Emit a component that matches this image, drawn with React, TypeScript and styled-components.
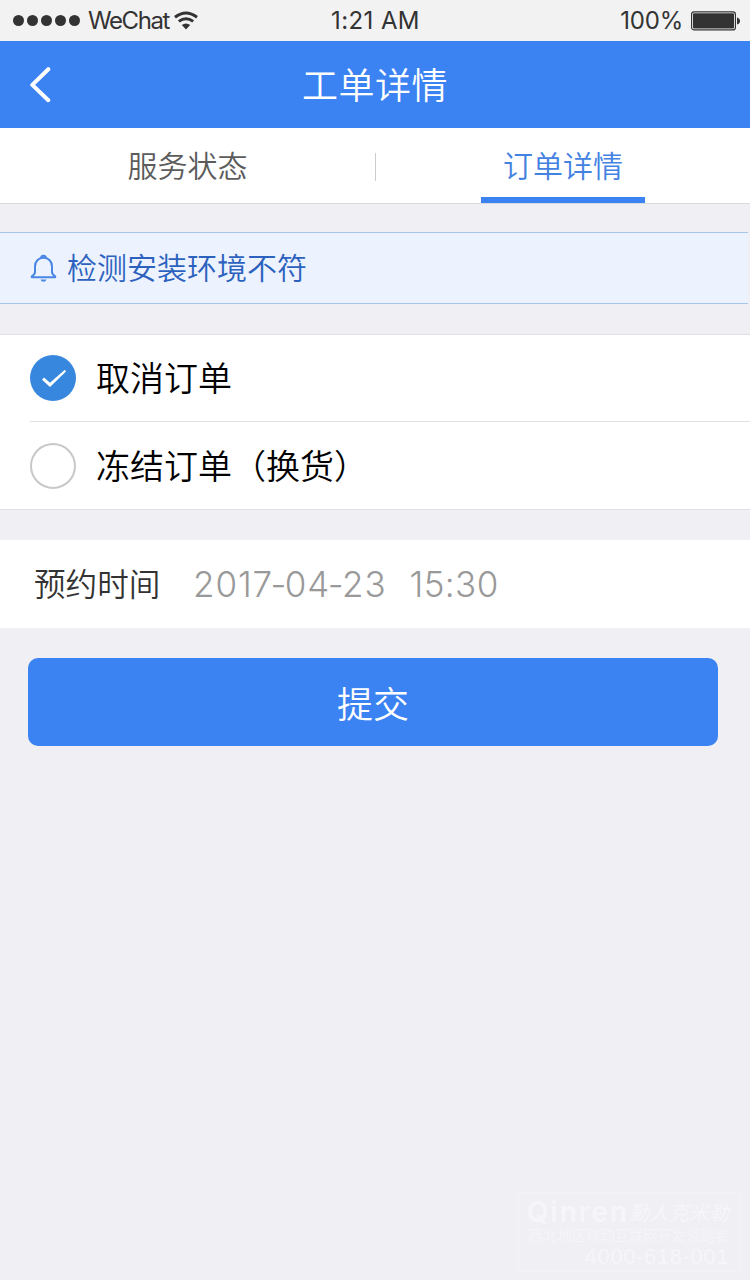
import React, { useState } from "react";
import styled, { createGlobalStyle, css } from "styled-components";

const cjk = `"Noto Sans CJK SC", sans-serif`;
const latin = `Inter, "Noto Sans CJK SC", sans-serif`;

const GlobalStyle = createGlobalStyle`
  *, *::before, *::after { box-sizing: border-box; }
  html, body { margin: 0; padding: 0; background: #efeff4; }
  button { border: 0; padding: 0; margin: 0; background: none; font: inherit; color: inherit; }
`;

const Screen = styled.div`
  width: 750px;
  height: 1280px;
  display: flex;
  flex-direction: column;
  background: #efeff4;
  font-family: ${cjk};
  font-weight: 350;
  overflow: hidden;
`;

const StatusBar = styled.div`
  flex: none;
  height: 41px;
  padding: 0 10px 0 13px;
  display: grid;
  grid-template-columns: 1fr auto 1fr;
  align-items: center;
  background: #f2f2f2;
  color: #333;
  font-family: ${latin};
  font-weight: 400;
  font-size: 24px;
  line-height: 41px;
`;

const StatusGroup = styled.div<{ $end?: boolean }>`
  display: flex;
  align-items: center;
  justify-content: ${(p) => (p.$end ? "flex-end" : "flex-start")};
`;

const SignalDots = styled.div`
  display: flex;
  gap: 3px;
  margin-right: 8px;
`;

const Dot = styled.i`
  width: 11px;
  height: 11px;
  border-radius: 50%;
  background: #333;
`;

const StatusText = styled.span<{ $spacing?: number }>`
  letter-spacing: ${(p) => p.$spacing ?? 0}px;
  white-space: nowrap;
`;

const Clock = styled(StatusText)`
  margin-right: 2px;
`;

const WifiIcon = styled.svg`
  margin-left: 5px;
`;

const BatteryIcon = styled.svg`
  margin-left: 8px;
`;

const NavBar = styled.header`
  flex: none;
  height: 87px;
  padding: 0 29px;
  display: grid;
  grid-template-columns: 24px 1fr 24px;
  align-items: center;
  background: #3b82f3;
  color: #fff;
`;

const BackButton = styled.button`
  display: flex;
`;

const NavTitle = styled.h1`
  margin: 0;
  height: 87px;
  font-size: 36px;
  line-height: 84px;
  letter-spacing: 0.5px;
  font-weight: 350;
  text-align: center;
`;

const Tabs = styled.nav`
  flex: none;
  height: 76px;
  display: grid;
  grid-template-columns: 375px 1px 1fr;
  background: #fff;
  border-bottom: 1px solid #d9d9de;
`;

const Tab = styled.button<{ $active?: boolean }>`
  display: flex;
  justify-content: center;
  font-size: 30px;
  line-height: 73px;
  color: ${(p) => (p.$active ? "#4482e2" : "#5c5c5c")};
`;

const TabLabel = styled.span<{ $active?: boolean }>`
  height: 75px;
  padding: 0 22px;
  ${(p) =>
    p.$active &&
    css`
      box-shadow: inset 0 -6px 0 #3b82f3;
    `}
`;

const TabDivider = styled.div`
  height: 28px;
  margin-top: 25px;
  background: #ccc;
`;

const Notice = styled.section`
  flex: none;
  width: 748px;
  height: 72px;
  margin-top: 28px;
  padding-left: 30px;
  display: flex;
  align-items: center;
  gap: 10px;
  background: #ecf3ff;
  border: solid #a9c4ea;
  border-width: 1px 0;
  color: #2c62bd;
`;

const NoticeText = styled.span`
  height: 70px;
  font-size: 30px;
  line-height: 67px;
`;

const OptionList = styled.section`
  flex: none;
  height: 176px;
  margin-top: 30px;
  padding-left: 30px;
  background: #fff;
  border: solid #e1e1e5;
  border-width: 1px 0;
`;

const Option = styled.button`
  width: 100%;
  height: 86px;
  display: flex;
  align-items: center;
  gap: 20px;
  color: #000;
  font-size: 34px;
  text-align: left;

  & + & {
    height: 88px;
    border-top: 1px solid #e1e1e5;
  }
`;

const OptionLabel = styled.span`
  height: 86px;
  line-height: 83px;
`;

const Radio = styled.span<{ $checked: boolean }>`
  flex: none;
  width: 46px;
  height: 46px;
  border-radius: 50%;
  display: flex;
  background: ${(p) => (p.$checked ? "#3787df" : "#fff")};
  border: ${(p) => (p.$checked ? "0" : "2px solid #c8c8c8")};
`;

const Appointment = styled.section`
  flex: none;
  height: 88px;
  margin-top: 30px;
  padding-left: 34px;
  display: flex;
  background: #fff;
`;

const FieldLabel = styled.span`
  width: 159px;
  font-size: 31.6px;
  line-height: 85px;
  color: #333;
`;

const FieldValue = styled.time`
  display: flex;
  gap: 23px;
  font-family: ${latin};
  font-weight: 300;
  font-size: 35px;
  line-height: 88px;
  color: #999;
`;

const DateText = styled.span`
  letter-spacing: 0.9px;
`;

const Hyphen = styled.span`
  margin: 0 -2.5px;
`;

const TimeText = styled.span`
  letter-spacing: 0.4px;
`;

const Submit = styled.button`
  flex: none;
  width: 690px;
  height: 88px;
  margin: 30px 0 0 28px;
  border-radius: 10px;
  background: #3b82f3;
  color: #fff;
  font-size: 36px;
  line-height: 88px;
`;

const Watermark = styled.footer`
  width: 224px;
  height: 80px;
  margin: auto 9px 8px auto;
  padding: 1px 10px 0;
  display: flex;
  flex-direction: column;
  align-items: flex-end;
  border: 2px solid #f2f2f6;
  color: #f6f6fa;
  white-space: nowrap;
`;

const Brand = styled.div`
  display: flex;
  align-items: center;
  height: 34px;
  font: 600 28px/34px ${latin};
  letter-spacing: 2px;
`;

const BrandName = styled.span`
  font: italic 400 20px/34px ${cjk};
  letter-spacing: 0;
`;

const Slogan = styled.div`
  font: 400 14.3px/15px "Liberation Sans", ${cjk};
  color: #f5f5f9;
`;

const Phone = styled.div`
  font: 400 22px/26px "Liberation Sans", sans-serif;
  letter-spacing: 0.6px;
`;

const options = ["取消订单", "冻结订单（换货）"];

export default function App() {
  const [selected, setSelected] = useState(0);
  return (
    <>
      <GlobalStyle />
      <Screen>
        <StatusBar>
          <StatusGroup>
            <SignalDots>
              {[0, 1, 2, 3, 4].map((n) => (
                <Dot key={n} />
              ))}
            </SignalDots>
            <StatusText $spacing={-1.4}>WeChat</StatusText>
            <WifiIcon width="24" height="19" viewBox="0 0 24 19" fill="none" stroke="#333" strokeWidth="3">
              <path d="M1 6.2Q12-2.2 23 6.2" />
              <path d="M4.8 10.4Q12 5 19.2 10.4" />
              <path d="M12 18.5L7.8 14.1Q12 11 16.2 14.1Z" fill="#333" stroke="none" />
            </WifiIcon>
          </StatusGroup>
          <Clock $spacing={0.4}>1:21 AM</Clock>
          <StatusGroup $end>
            <StatusText $spacing={-0.2}>100%</StatusText>
            <BatteryIcon width="49" height="20" viewBox="0 0 49 20">
              <rect x="0.6" y="0.9" width="43.8" height="18" rx="2.5" fill="#fff" stroke="#333" strokeWidth="1.2" />
              <rect x="2" y="2.3" width="41" height="15.2" rx="1" fill="#333" />
              <path d="M46 6.5Q49 7.5 49 10T46 13.5Z" fill="#333" />
            </BatteryIcon>
          </StatusGroup>
        </StatusBar>

        <NavBar>
          <BackButton aria-label="返回">
            <svg width="24" height="36" viewBox="0 0 24 36" fill="none" stroke="#fff" strokeWidth="4" strokeLinecap="round" strokeLinejoin="round">
              <path d="M19.3 2.2L3.3 17.9L19.3 33.2" />
            </svg>
          </BackButton>
          <NavTitle>工单详情</NavTitle>
        </NavBar>

        <Tabs>
          <Tab>
            <TabLabel>服务状态</TabLabel>
          </Tab>
          <TabDivider />
          <Tab $active>
            <TabLabel $active>订单详情</TabLabel>
          </Tab>
        </Tabs>

        <Notice>
          <svg width="27" height="28" viewBox="0 0 27 28" fill="none" stroke="#4a86e4" strokeWidth="2" strokeLinejoin="round">
            <path d="M11.2 4Q11.2 1.8 13.5 1.8T15.8 4" />
            <path d="M13.5 3.7C8.3 3.7 5 7.5 5 12.5V18Q5 20.5 1.8 22.3V23.3H25.2V22.3Q22 20.5 22 18V12.5C22 7.5 18.7 3.7 13.5 3.7Z" />
            <path d="M10.5 25.5H16.5Q15.8 27.8 13.5 27.8T10.5 25.5Z" fill="#4a86e4" stroke="none" />
          </svg>
          <NoticeText>检测安装环境不符</NoticeText>
        </Notice>

        <OptionList>
          {options.map((label, i) => (
            <Option key={label} onClick={() => setSelected(i)}>
              <Radio $checked={selected === i}>
                {selected === i && (
                  <svg width="46" height="46" viewBox="0 0 46 46">
                    <path d="M12 24.8L14 22.6L20 27.8L34.8 14.8L36 16.4L20 32Z" fill="#fff" />
                  </svg>
                )}
              </Radio>
              <OptionLabel>{label}</OptionLabel>
            </Option>
          ))}
        </OptionList>

        <Appointment>
          <FieldLabel>预约时间</FieldLabel>
          <FieldValue>
            <DateText>
              2017<Hyphen>-</Hyphen>04<Hyphen>-</Hyphen>23
            </DateText>
            <TimeText>15:30</TimeText>
          </FieldValue>
        </Appointment>

        <Submit>提交</Submit>

        <Watermark>
          <Brand>
            Qinren<BrandName>勤人克米勒</BrandName>
          </Brand>
          <Slogan>西北地区移动互联网开发领跑者</Slogan>
          <Phone>4000-618-001</Phone>
        </Watermark>
      </Screen>
    </>
  );
}
